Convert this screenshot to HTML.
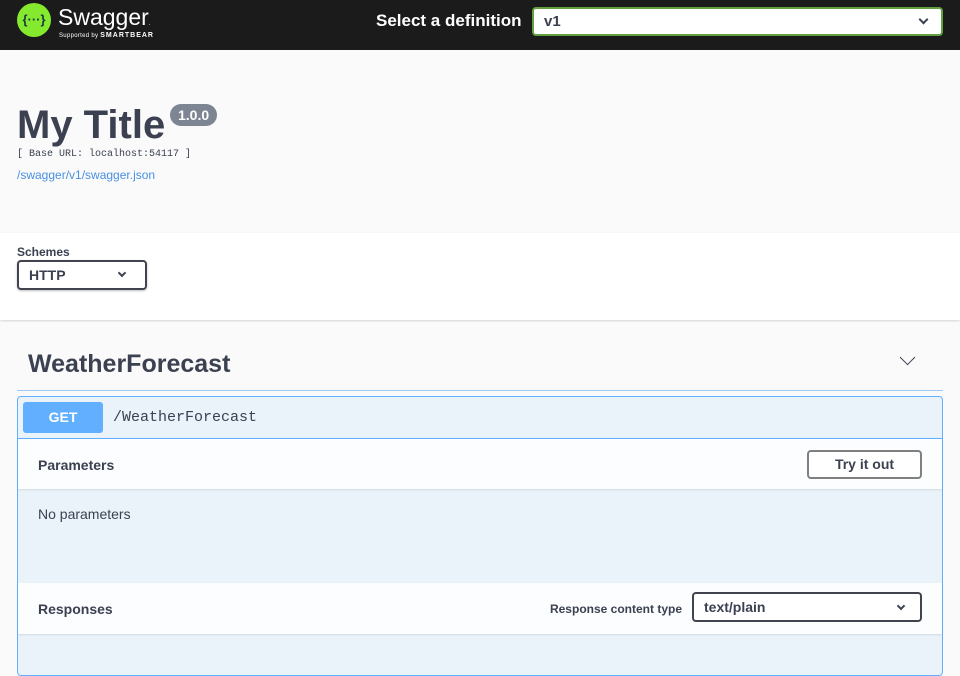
<!DOCTYPE html>
<html><head><style>
*{box-sizing:border-box;margin:0;padding:0}
body{width:960px;height:668px;overflow:hidden;background:#fafafa;font-family:"Liberation Sans",sans-serif;color:#3b4151}
.top{height:50px;background:#1b1b1b;position:relative}
.logo{position:absolute;left:17px;top:3px;width:34px;height:34px;border-radius:50%;background:#85ea2d;color:#173647;font-size:13px;font-weight:bold;text-align:center;line-height:34px}
.sw{position:absolute;left:58px;top:4px;color:#fff;font-size:23px}
.sb{position:absolute;left:59px;top:32px;color:#fff;font-size:6px;letter-spacing:.3px}
.sb b{font-size:7px;letter-spacing:1px}
.seld{position:absolute;left:376px;top:11px;color:#fff;font-weight:bold;font-size:17px}
.sel{position:absolute;left:532px;top:7px;width:411px;height:29px;background:#fff;border:2px solid #62a03f;border-radius:4px;font-weight:bold;font-size:15px;padding:4px 10px;color:#3b4151}
.chev{position:absolute;right:14px;top:7px;width:7px;height:7px;border-right:2px solid #3b4151;border-bottom:2px solid #3b4151;transform:rotate(45deg)}
.info{height:183px;position:relative}
h1{position:absolute;left:17px;font-size:40px;font-weight:bold;color:#3b4151;top:0;margin-top:53px}
.ver{position:absolute;left:170px;top:54px;background:#7d8492;color:#fff;border-radius:11px;font-size:14px;font-weight:bold;padding:3px 8px}
.base{position:absolute;left:17px;top:99px;font-family:"Liberation Mono",monospace;font-size:10px;color:#3b4151}
.link{position:absolute;left:17px;top:118px;font-size:12px;color:#4990e2}
.schemes{height:87px;background:#fff;position:relative;box-shadow:0 1px 2px rgba(0,0,0,.15)}
.schemes .l{position:absolute;left:17px;top:12px;font-size:12px;font-weight:bold}
.hs{position:absolute;left:17px;top:27px;width:130px;height:30px;border:2px solid #41444e;border-radius:4px;font-weight:bold;font-size:14px;padding:5px 10px;box-shadow:0 1px 2px rgba(0,0,0,.25)}
.hs .chev{right:20px;top:8px;width:6px;height:6px}
.tag{position:absolute;left:17px;top:340px;width:926px;height:51px;border-bottom:1px solid #9fc8ef}
.tag span{position:absolute;left:11px;top:10px;font-size:25px;font-weight:bold}
.tag .chev{right:30px;top:12px;width:11px;height:11px;border-width:1.5px}
.op{position:absolute;left:17px;top:396px;width:926px;height:280px;border:1px solid #61affe;border-radius:4px;background:rgba(97,175,254,.1)}
.get{position:absolute;left:5px;top:5px;width:80px;height:31px;background:#61affe;border-radius:3px;color:#fff;font-weight:bold;font-size:14px;text-align:center;line-height:31px}
.path{position:absolute;left:95px;top:12px;font-family:"Liberation Mono",monospace;font-size:15px}
.bar{position:absolute;left:0;width:924px;height:51px;background:rgba(255,255,255,.8);box-shadow:0 1px 2px rgba(0,0,0,.1)}
.bar .t{position:absolute;left:20px;top:18px;font-size:14px;font-weight:bold}
.btn{position:absolute;right:20px;top:11px;width:115px;height:29px;border:2px solid #808080;border-radius:4px;background:#fff;font-weight:bold;font-size:14px;text-align:center;line-height:25px}
.np{position:absolute;left:20px;top:109px;font-size:14px}
.rct{position:absolute;right:260px;top:19px;font-size:12px;font-weight:bold}
.rs{position:absolute;right:20px;top:9px;width:230px;height:30px;border:2px solid #41444e;border-radius:4px;background:#fff;font-weight:bold;font-size:14px;padding:5px 10px}
.rs .chev{right:16px;top:9px;width:6px;height:6px}
</style></head><body>
<div class="top">
<div class="logo">{···}</div>
<div class="sw">Swagger<span style="font-size:6px">.</span></div>
<div class="sb">Supported by <b>SMARTBEAR</b></div>
<div class="seld">Select a definition</div>
<div class="sel">v1<div class="chev"></div></div>
</div>
<div class="info">
<h1>My Title</h1>
<div class="ver">1.0.0</div>
<div class="base">[ Base URL: localhost:54117 ]</div>
<div class="link">/swagger/v1/swagger.json</div>
</div>
<div class="schemes"><div class="l">Schemes</div><div class="hs">HTTP<div class="chev"></div></div></div>
<div class="tag"><span>WeatherForecast</span><div class="chev"></div></div>
<div class="op">
<div class="get">GET</div><div class="path">/WeatherForecast</div>
<div class="bar" style="top:41px;border-top:1px solid #61affe"><div class="t">Parameters</div><div class="btn">Try it out</div></div>
<div class="np">No parameters</div>
<div class="bar" style="top:186px"><div class="t">Responses</div><div class="rct">Response content type</div><div class="rs">text/plain<div class="chev"></div></div></div>
</div>
</body></html>
